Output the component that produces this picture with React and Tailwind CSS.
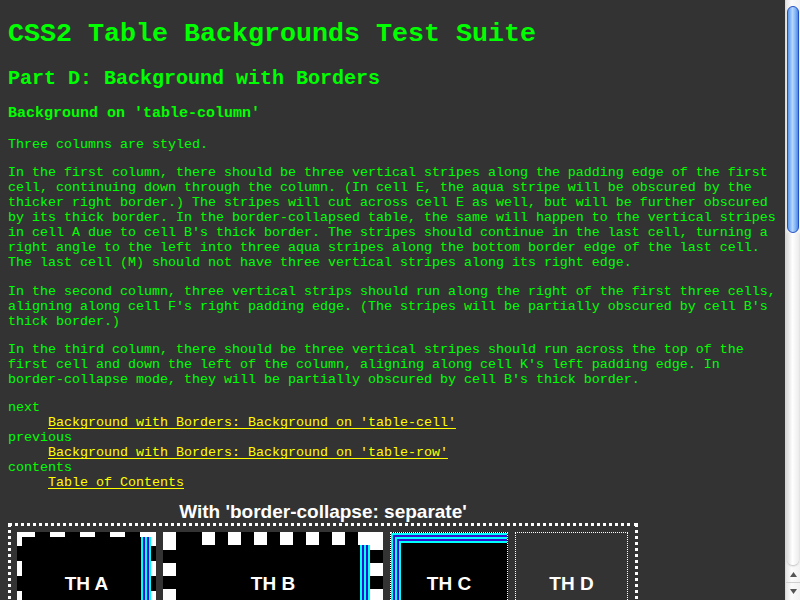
import React from "react";

const CYAN = "#00ffff";
const BLUE = "#3311cc";

// three aqua stripes (cyan/blue) 10px wide
const VStripes = ({ x, y, h }) =>
    [0, 1, 2, 3, 4].map((i) => (
        <rect key={i} x={x + 2 * i} y={y} width={2} height={h} fill={i % 2 ? BLUE : CYAN} />
    ));

const Label = ({ children }) => (
    <span className="relative font-['Liberation_Sans',Arial,sans-serif] text-[19px] font-bold leading-none text-white">
        {children}
    </span>
);

function CellA() {
    const top = [[0, 18], [33, 15], [63, 15], [93, 15], [123, 16]];
    const side = [[0, 14], [29, 15], [59, 15], [89, 13]];
    return (
        <div className="relative flex h-[102px] w-[139px] shrink-0 items-center justify-center bg-black">
            <svg className="absolute inset-0" width="139" height="102">
                {top.map(([x, w]) => (
                    <g key={x}>
                        <rect x={x} y={0} width={w} height={5} fill="#fff" />
                        <rect x={x} y={97} width={w} height={5} fill="#fff" />
                    </g>
                ))}
                {side.map(([y, h]) => (
                    <g key={y}>
                        <rect x={0} y={y} width={5} height={h} fill="#fff" />
                        <rect x={134} y={y} width={5} height={h} fill="#fff" />
                    </g>
                ))}
                <VStripes x={124} y={5} h={92} />
            </svg>
            <Label>TH A</Label>
        </div>
    );
}

function CellB() {
    const top = [[0, 13], [39, 13], [65, 13], [91, 13], [117, 13], [143, 13], [169, 13], [195, 25]];
    const side = [[0, 18], [31, 13], [57, 13], [83, 19]];
    return (
        <div className="relative flex h-[102px] w-[220px] shrink-0 items-center justify-center bg-black">
            <svg className="absolute inset-0" width="220" height="102">
                {top.map(([x, w]) => (
                    <g key={x}>
                        <rect x={x} y={0} width={w} height={13} fill="#fff" />
                        <rect x={x} y={89} width={w} height={13} fill="#fff" />
                    </g>
                ))}
                {side.map(([y, h]) => (
                    <g key={y}>
                        <rect x={0} y={y} width={13} height={h} fill="#fff" />
                        <rect x={207} y={y} width={13} height={h} fill="#fff" />
                    </g>
                ))}
                <VStripes x={197} y={13} h={76} />
            </svg>
            <Label>TH B</Label>
        </div>
    );
}

function CellC() {
    return (
        <div className="relative flex h-[102px] w-[118px] shrink-0 items-center justify-center border border-dotted border-white bg-black">
            <svg className="absolute inset-0" width="116" height="100">
                {[0, 1, 2, 3, 4].map((i) => (
                    <rect key={i} x={2 * i} y={2 * i} width={116 - 2 * i} height={100 - 2 * i} fill={i % 2 ? BLUE : CYAN} />
                ))}
                <rect x={10} y={10} width={106} height={90} fill="#000" />
            </svg>
            <Label>TH C</Label>
        </div>
    );
}

function CellD() {
    return (
        <div className="flex h-[102px] w-[113px] shrink-0 items-center justify-center border border-dotted border-white">
            <Label>TH D</Label>
        </div>
    );
}

function Scrollbar() {
    return (
        <div className="flex h-full w-[15px] shrink-0 flex-col border-l border-[#d9d9d9] bg-[linear-gradient(90deg,#e4e4e4,#fbfbfb_40%,#f2f2f2)]">
            <div className="flex flex-1 flex-col px-px pt-[6px]">
                <div className="h-[227px] rounded-[7px] border border-[#2450c4] bg-[linear-gradient(90deg,#5a98ee,#b4d6fc_45%,#7fb3f6_75%,#4f8ae6)]" />
                <div className="mb-px flex-1 rounded-b-[7px] bg-[linear-gradient(90deg,#dcdcdc,#ffffff_45%,#ececec)] shadow-[0_1px_2px_#bbb]" />
            </div>
            <div className="flex h-[17px] items-center justify-center border-b border-[#cfcfcf]">
                <svg width="7" height="5"><path d="M3.5 0 L7 5 L0 5 Z" fill="#555" /></svg>
            </div>
            <div className="flex h-[17px] items-center justify-center">
                <svg width="7" height="5"><path d="M0 0 L7 0 L3.5 5 Z" fill="#555" /></svg>
            </div>
        </div>
    );
}

export default function App() {
    return (
        <div className="flex h-screen w-full overflow-hidden bg-[#333333]">
            <div className="min-w-0 flex-1 overflow-hidden px-2 font-['Liberation_Mono','Courier_New',monospace] text-[13.333px] leading-[15px] text-[#00ff00]">
                <h1 className="mt-[18.5px] text-[26.667px] font-bold leading-[30px]">CSS2 Table Backgrounds Test Suite</h1>
                <h2 className="mt-[18px] text-[20px] font-bold leading-[23px]">Part D: Background with Borders</h2>
                <h3 className="mt-[15px] text-[15px] font-bold leading-[18px]">Background on 'table-column'</h3>

                <p className="mt-[14.5px]">Three columns are styled.</p>
                <p className="mt-[13.33px]">
                    In the first column, there should be three vertical stripes along the padding edge of the first
                    cell, continuing down through the column. (In cell E, the aqua stripe will be obscured by the
                    thicker right border.) The stripes will cut across cell E as well, but will be further obscured
                    by its thick border. In the border-collapsed table, the same will happen to the vertical stripes
                    in cell A due to cell B's thick border. The stripes should continue in the last cell, turning a
                    right angle to the left into three aqua stripes along the bottom border edge of the last cell.
                    The last cell (M) should not have three vertical stripes along its right edge.
                </p>
                <p className="mt-[13.33px]">
                    In the second column, three vertical strips should run along the right of the first three cells,
                    aligning along cell F's right padding edge. (The stripes will be partially obscured by cell B's
                    thick border.)
                </p>
                <p className="mt-[13.33px]">
                    In the third column, there should be three vertical stripes should run across the top of the
                    first cell and down the left of the column, aligning along cell K's left padding edge. In
                    border-collapse mode, they will be partially obscured by cell B's thick border.
                </p>

                <dl className="mt-[13.33px]">
                    <dt>next</dt>
                    <dd className="pl-10">
                        <a className="text-[#ffff00] underline underline-offset-2">Background with Borders: Background on 'table-cell'</a>
                    </dd>
                    <dt>previous</dt>
                    <dd className="pl-10">
                        <a className="text-[#ffff00] underline underline-offset-2">Background with Borders: Background on 'table-row'</a>
                    </dd>
                    <dt>contents</dt>
                    <dd className="pl-10">
                        <a className="text-[#ffff00] underline underline-offset-2">Table of Contents</a>
                    </dd>
                </dl>

                <div className="mt-[11px] w-[630px] text-center font-['Liberation_Sans',Arial,sans-serif] text-[19px] font-bold leading-[22px] text-white">
                    With 'border-collapse: separate'
                </div>
                <div className="flex w-[630px] gap-[7px] border-[3px] border-dotted border-white py-[6px] pl-[6px] pr-[7px]">
                    <CellA />
                    <CellB />
                    <CellC />
                    <CellD />
                </div>
            </div>
            <Scrollbar />
        </div>
    );
}
